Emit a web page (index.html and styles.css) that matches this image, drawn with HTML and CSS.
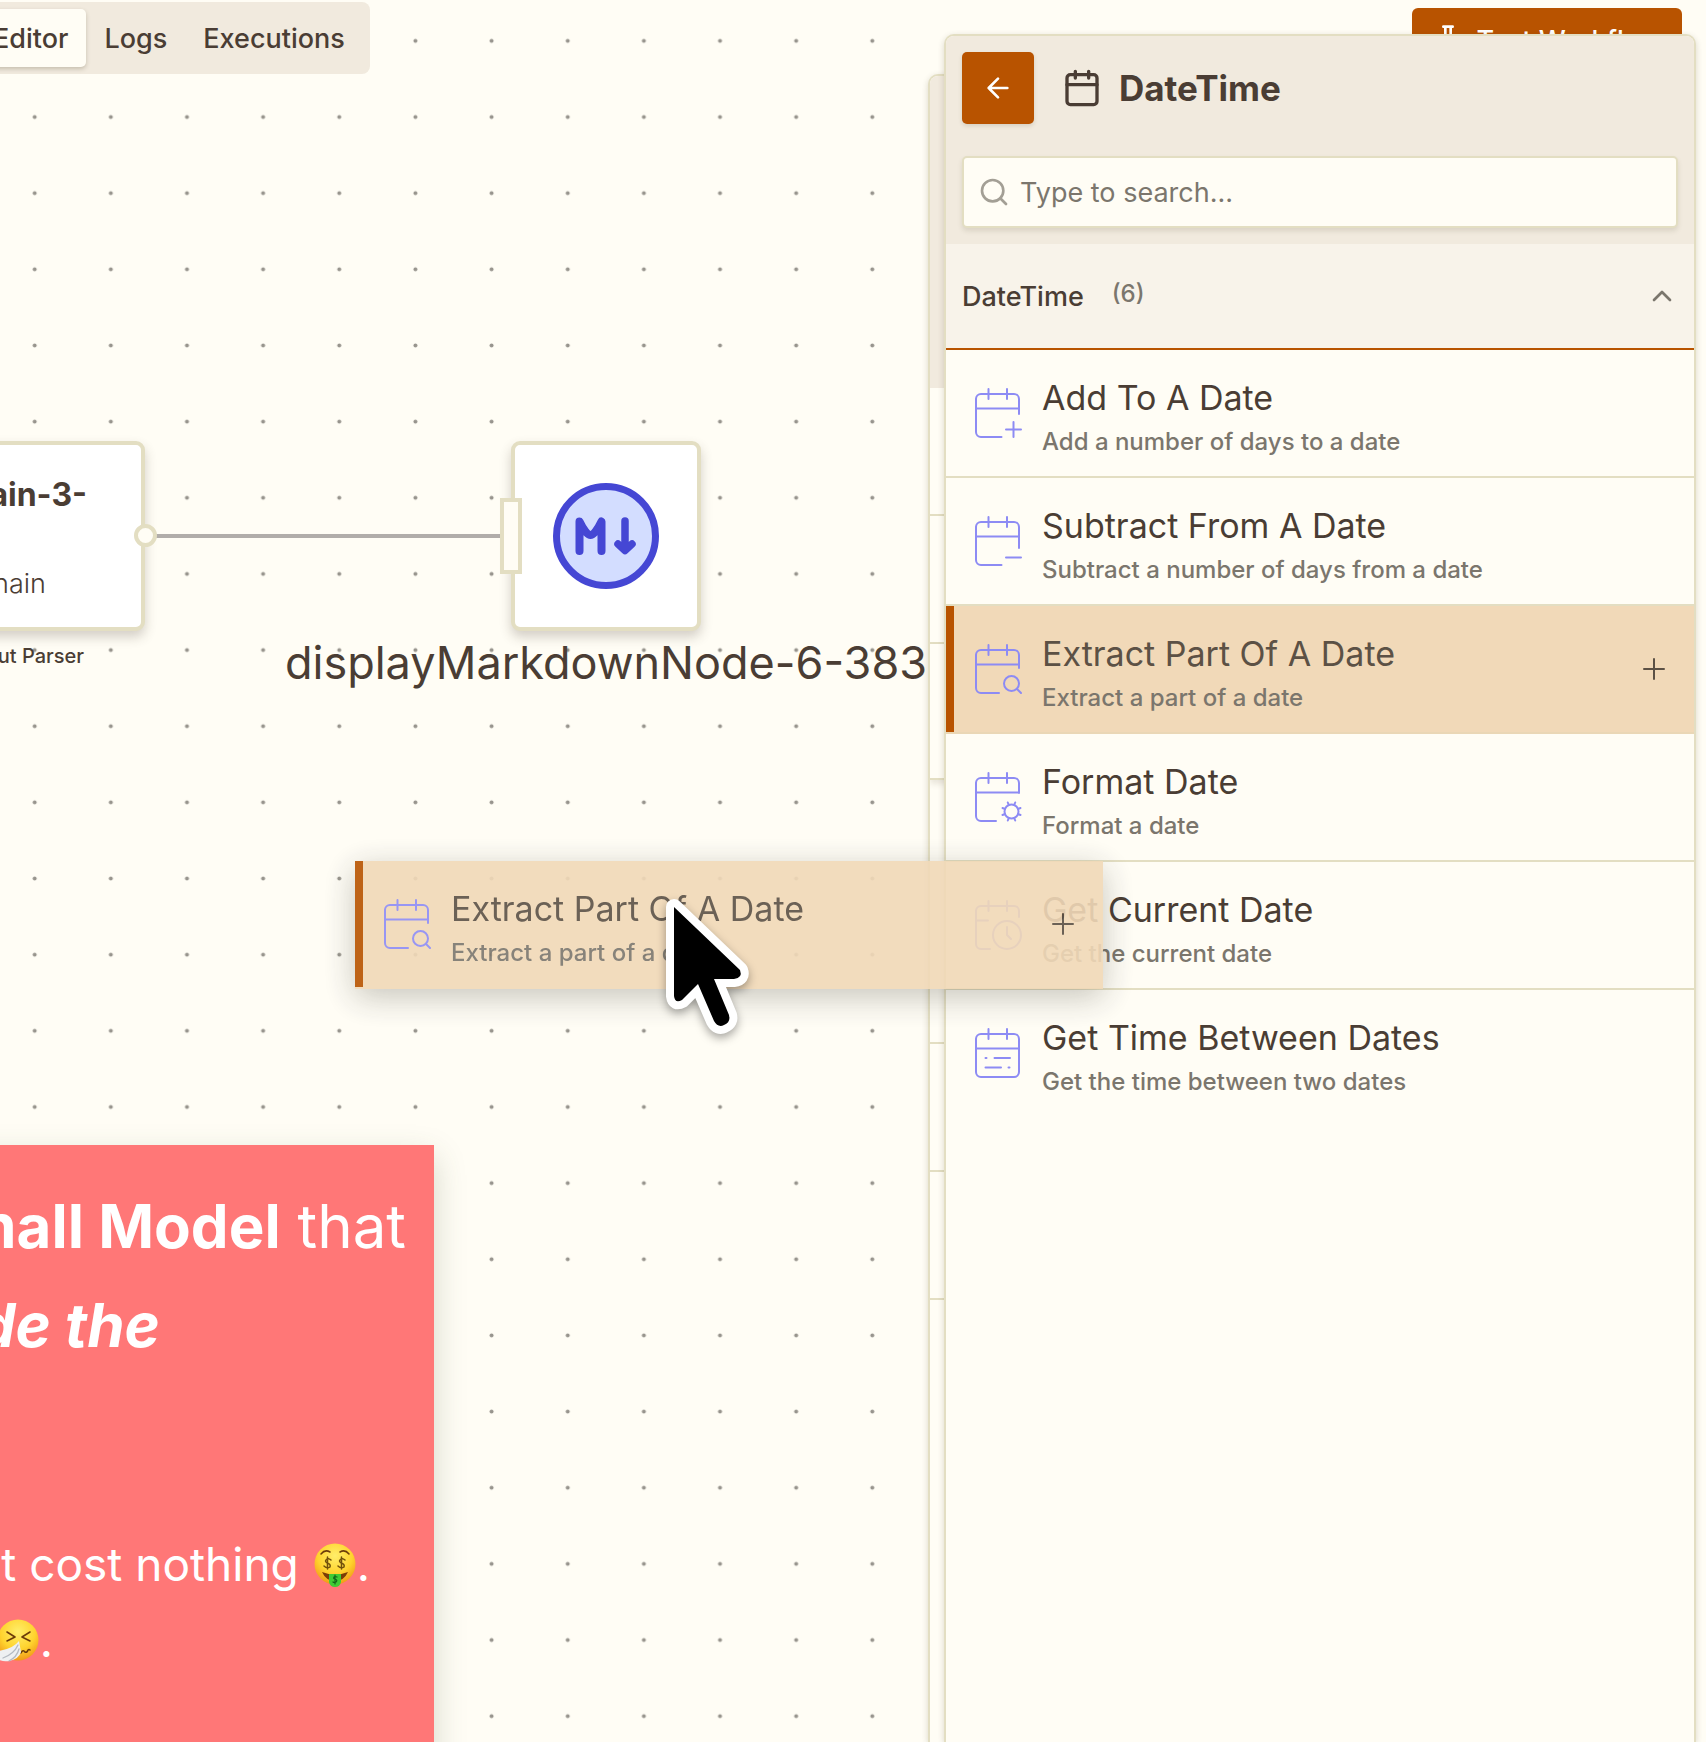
FILE: index.html
```html
<!DOCTYPE html>
<html lang="en">
<head>
<meta charset="utf-8">
<meta name="viewport" content="width=device-width, initial-scale=1">
<title>Workflow Editor</title>
<link rel="stylesheet" href="styles.css">
</head>
<body>
<svg class="sprite" aria-hidden="true">
  <symbol id="cal-plus" viewBox="0 0 48 50">
    <path d="M27.500 49H7a5 5 0 0 1-5-5V11a5 5 0 0 1 5-5h33a5 5 0 0 1 5 5v15M2 20.500h43M14.500 1v10M33 1v10M39.500 34v15M32 41.500h15"/>
  </symbol>
  <symbol id="cal-minus" viewBox="0 0 48 50">
    <path d="M27.500 49H7a5 5 0 0 1-5-5V11a5 5 0 0 1 5-5h33a5 5 0 0 1 5 5v21M2 20.500h43M14.500 1v10M33 1v10M32 41.500h15"/>
  </symbol>
  <symbol id="cal-search" viewBox="0 0 48 50">
    <path d="M25 49H7a5 5 0 0 1-5-5V11a5 5 0 0 1 5-5h33a5 5 0 0 1 5 5v13M2 20.500h43M14.500 1v10M33 1v10M43 45l4 4"/>
    <circle cx="37.500" cy="39.500" r="7.500"/>
  </symbol>
  <symbol id="cal-gear" viewBox="0 0 48 50">
    <path d="M22 49H7a5 5 0 0 1-5-5V11a5 5 0 0 1 5-5h33a5 5 0 0 1 5 5v10M2 20.500h43M14.500 1v10M33 1v10M34.800 33l-1-2.500M40.200 33l1-2.500M34.800 46l-1 2.500M40.200 46l1 2.500M31 37l-2.500-1M31 42l-2.500 1M44 37l2.500-1M44 42l2.500 1"/>
    <circle cx="37.500" cy="39.500" r="7"/>
  </symbol>
  <symbol id="cal-clock" viewBox="0 0 48 50">
    <path d="M16 49H7a5 5 0 0 1-5-5V11a5 5 0 0 1 5-5h33a5 5 0 0 1 5 5v6M2 20.500h12M14.500 1v10M33 1v10M33 27v8l4 4"/>
    <circle cx="33" cy="35" r="14"/>
  </symbol>
  <symbol id="cal-list" viewBox="0 0 48 50">
    <rect x="2" y="6" width="43" height="43" rx="5"/>
    <path d="M2 20.500h43M14.500 1v10M33 1v10M11.500 30h1M20.500 30H36M11.500 39.500H27M34.500 39.500h1"/>
  </symbol>
  <symbol id="plus" viewBox="0 0 24 24"><path d="M12 2v20M2 12h20"/></symbol>
</svg>

<main class="canvas">
  <svg class="grid" aria-hidden="true">
    <defs>
      <pattern id="dots" x="-3.400" y="2.800" width="76.150" height="76.150" patternUnits="userSpaceOnUse">
        <circle cx="38.080" cy="38.080" r="2" fill="#97948d"/>
      </pattern>
    </defs>
    <rect width="100%" height="100%" fill="url(#dots)"/>
  </svg>

  <header class="topbar">
    <nav class="tabs" aria-label="Views">
      <button class="tab tab-active" type="button">Editor</button>
      <button class="tab" type="button">Logs</button>
      <button class="tab" type="button">Executions</button>
    </nav>
    <button class="test-button" type="button">
      <svg class="icon-32" viewBox="0 0 24 24" aria-hidden="true"><path d="M10 2v8L4.700 20.550a1 1 0 0 0 .9 1.450h12.800a1 1 0 0 0 .9-1.450L14 10V2M8.500 2h7M7 16h10"/></svg>
      Test Workflow
    </button>
  </header>

  <div class="edge"></div>

  <article class="node node-chain">
    <h3 class="node-title">chain-3-</h3>
    <p class="node-type">chain</p>
    <span class="port-out"></span>
  </article>
  <p class="port-label">Output Parser</p>

  <article class="node node-markdown">
    <span class="port-in"></span>
    <svg class="markdown-icon" viewBox="0 0 106 106" role="img" aria-label="Markdown">
      <circle cx="53" cy="53" r="49.500" fill="#d3ddff" stroke="#4547d4" stroke-width="7"/>
      <g fill="none" stroke="#4547d4" stroke-width="8" stroke-linecap="round" stroke-linejoin="round">
        <path d="M26.500 68V38.500q6.500 13.500 11 13.500t11-13.500V68"/>
        <path d="M72 38v29M65 61l7 6.500 7-6.500" stroke-width="7.500"/>
      </g>
    </svg>
  </article>
  <p class="node-label">displayMarkdownNode-6-383</p>

  <section class="sticky">
    <p class="sticky-lead"><strong>Small Model</strong> that</p>
    <p class="sticky-lead sticky-second"><strong><em>de the</em></strong></p>
    <p class="sticky-text sticky-third">it cost nothing <svg class="emoji" viewBox="0 0 42 44" role="img" aria-label="Money-mouth face">
      <defs><radialGradient id="face" cx=".5" cy=".3" r=".7"><stop offset="0" stop-color="#ffee6a"/><stop offset=".6" stop-color="#ffd32e"/><stop offset="1" stop-color="#f19a18"/></radialGradient></defs>
      <circle cx="21" cy="21" r="20.500" fill="url(#face)"/>
      <path d="M7 11q4-5 9-2M26 9q5-3 9 2" fill="none" stroke="#6b3c0a" stroke-width="1.500" stroke-linecap="round"/>
      <path d="M8 29q13 5 26 0-4 9-13 9T8 29z" fill="#7a3d08"/>
      <g fill="none" stroke="#71500b" stroke-width="1.500"><path d="M17 17q-2-2-4-1-3 2 0 4 4 1 3 4-3 2-6-1M13.500 14v12M31 17q-2-2-4-1-3 2 0 4 4 1 3 4-3 2-6-1M27.500 14v12"/></g>
      <path d="M15 31h12v8q-1 5-6 5t-6-5z" fill="#3fcb34"/>
      <path d="M23 34q-2-1-3 0-1 2 1 2 3 1 1 3-2 1-3 0M21 32v9" fill="none" stroke="#12651a" stroke-width="1.200"/>
    </svg>.</p>
    <p class="sticky-text sticky-fourth"><svg class="emoji" viewBox="0 0 42 44" role="img" aria-label="Sneezing face">
      <circle cx="21" cy="21" r="20.500" fill="url(#face)"/>
      <path d="M10 13l8 5-8 4M33 13l-8 5 8 4M24 34q2-4 4-1 2 1 3-2 1-1 2 0" fill="none" stroke="#6b3c0a" stroke-width="1.600" stroke-linecap="round"/>
      <path d="M22 22q-6 8-21 10l1 9q5 2 10 1 10-2 12-9z" fill="#eef0f2"/>
      <path d="M21 26q-4 9-15 13M22 30q-2 8-10 12" fill="none" stroke="#b4bac2" stroke-width="1.300"/>
    </svg>.</p>
  </section>

  <aside class="drawer-back" aria-hidden="true">
    <div class="back-head"></div>
    <div class="back-row"></div>
    <div class="back-row"></div>
    <div class="back-row back-row-last"></div>
    <div class="back-row back-row-tall"></div>
    <div class="back-row"></div>
    <div class="back-row"></div>
  </aside>

  <aside class="drawer">
    <div class="drawer-head">
      <div class="drawer-title">
        <button class="back-button" type="button" aria-label="Back">
          <svg class="icon-32" viewBox="0 0 24 24" aria-hidden="true"><path d="M12 19l-7-7 7-7M19 12H5"/></svg>
        </button>
        <svg class="icon-40" viewBox="0 0 24 24" aria-hidden="true"><rect x="3" y="4" width="18" height="18" rx="2"/><path d="M16 2v4M8 2v4M3 10h18"/></svg>
        <h2>DateTime</h2>
      </div>
      <label class="search">
        <svg class="icon-32" viewBox="0 0 24 24" aria-hidden="true"><circle cx="11" cy="11" r="8"/><path d="M21 21l-4.300-4.300"/></svg>
        <input type="search" placeholder="Type to search..." aria-label="Search nodes">
      </label>
    </div>
    <button class="group-head" type="button" aria-expanded="true">
      <span class="group-name">DateTime</span>
      <span class="group-count">(6)</span>
      <svg class="icon-32" viewBox="0 0 24 24" aria-hidden="true"><path d="M18 15l-6-6-6 6"/></svg>
    </button>
    <ul class="items">
      <li class="item">
        <svg class="item-icon" aria-hidden="true"><use href="#cal-plus"/></svg>
        <div class="item-text"><h4>Add To A Date</h4><p>Add a number of days to a date</p></div>
      </li>
      <li class="item">
        <svg class="item-icon" aria-hidden="true"><use href="#cal-minus"/></svg>
        <div class="item-text"><h4>Subtract From A Date</h4><p>Subtract a number of days from a date</p></div>
      </li>
      <li class="item item-active">
        <svg class="item-icon" aria-hidden="true"><use href="#cal-search"/></svg>
        <div class="item-text"><h4>Extract Part Of A Date</h4><p>Extract a part of a date</p></div>
        <svg class="item-add" aria-hidden="true"><use href="#plus"/></svg>
      </li>
      <li class="item">
        <svg class="item-icon" aria-hidden="true"><use href="#cal-gear"/></svg>
        <div class="item-text"><h4>Format Date</h4><p>Format a date</p></div>
      </li>
      <li class="item">
        <svg class="item-icon" aria-hidden="true"><use href="#cal-clock"/></svg>
        <div class="item-text"><h4>Get Current Date</h4><p>Get the current date</p></div>
      </li>
      <li class="item">
        <svg class="item-icon" aria-hidden="true"><use href="#cal-list"/></svg>
        <div class="item-text"><h4>Get Time Between Dates</h4><p>Get the time between two dates</p></div>
      </li>
    </ul>
  </aside>

  <div class="item item-active drag-ghost">
    <svg class="item-icon" aria-hidden="true"><use href="#cal-search"/></svg>
    <div class="item-text"><h4>Extract Part Of A Date</h4><p>Extract a part of a date</p></div>
    <svg class="item-add" aria-hidden="true"><use href="#plus"/></svg>
  </div>

  <svg class="cursor" viewBox="0 0 100 150" aria-hidden="true">
    <path d="M14 17V106q1 8 8 4L38 94l16 37q4 7 10 4 7-3 5-10L54 89H74q9-1 6-9z" fill="#000" stroke="#fff" stroke-width="16" stroke-linejoin="round" paint-order="stroke"/>
  </svg>
</main>
</body>
</html>
```
FILE: styles.css
```css
:root {
  --bg: #fffdf5;
  --panel: #f1eade;
  --line: #e3dec2;
  --text: #4a3d34;
  --muted: #7b766d;
  --accent: #b85300;
  --highlight: #f1d9b8;
}

* { box-sizing: border-box; }

body {
  margin: 0;
  background: var(--bg);
  color: var(--text);
  font-family: Inter, "Liberation Sans", sans-serif;
}

h2, h3, h4, p, ul { margin: 0; padding: 0; font-weight: inherit; }

button { border: 0; font: inherit; color: inherit; cursor: pointer; }

svg { fill: none; stroke: currentColor; stroke-linecap: round; stroke-linejoin: round; }

.sprite { position: absolute; width: 0; height: 0; }
.icon-32 { flex: none; width: 32px; height: 32px; stroke-width: 2; }
.icon-40 { flex: none; width: 40px; height: 40px; stroke-width: 2; }

.canvas { position: relative; height: 100vh; overflow: hidden; }

.grid { position: absolute; inset: 0; width: 100%; height: 100%; stroke: none; }

/* Top bar */
.topbar {
  position: absolute;
  top: 2px;
  left: -32px;
  right: 24px;
  display: flex;
  justify-content: space-between;
  align-items: flex-start;
}

.tabs { display: flex; padding: 7px; border-radius: 8px; background: var(--panel); }

.tab {
  height: 58px;
  padding: 0 18px;
  border-radius: 5px;
  background: transparent;
  font-size: 27px;
  font-weight: 500;
}

.tab-active { background: var(--bg); box-shadow: 0 2px 4px rgba(70, 60, 30, .25); }

.test-button {
  display: flex;
  align-items: center;
  gap: 12px;
  height: 64px;
  margin-top: 6px;
  padding: 0 20px;
  border-radius: 6px;
  background: var(--accent);
  color: #fff;
  font-size: 27px;
  font-weight: 500;
}

/* Nodes on the canvas */
.edge {
  position: absolute;
  left: 156px;
  top: 534px;
  width: 344px;
  height: 4px;
  background: #b1adaa;
}

.node {
  position: absolute;
  top: 441px;
  height: 190px;
  border: 4px solid var(--line);
  border-radius: 9px;
  background: #fff;
  box-shadow: 0 6px 12px rgba(70, 60, 50, .24);
}

.node-chain { left: -240px; width: 385px; padding: 30px 0; text-align: right; }
.node-title { padding-right: 54px; font-size: 32px; line-height: 40px; font-weight: 700; }
.node-type { padding-right: 95px; margin-top: 53px; font-size: 27px; line-height: 32px; font-weight: 300; }

.port-out {
  position: absolute;
  right: -16px;
  top: 79px;
  width: 23px;
  height: 23px;
  border: 4px solid var(--line);
  border-radius: 50%;
  background: var(--bg);
}

.port-label {
  position: absolute;
  left: -156px;
  top: 644px;
  width: 240px;
  text-align: right;
  font-size: 20px;
  line-height: 24px;
  font-weight: 500;
}

.node-markdown {
  left: 511px;
  width: 190px;
  display: flex;
  align-items: center;
  justify-content: center;
}

.port-in {
  position: absolute;
  left: -15px;
  top: 53px;
  width: 22px;
  height: 76px;
  border: 4px solid var(--line);
  background: var(--bg);
}

.markdown-icon { width: 106px; height: 106px; }

.node-label {
  position: absolute;
  left: 256px;
  top: 636px;
  width: 700px;
  text-align: center;
  white-space: nowrap;
  font-size: 45px;
  line-height: 54px;
}

/* Sticky note */
.sticky {
  position: absolute;
  left: -400px;
  top: 1145px;
  bottom: -40px;
  width: 834px;
  background: #ff7777;
  color: #fff;
  text-align: right;
  white-space: nowrap;
  box-shadow: 0 12px 30px rgba(70, 80, 50, .22);
}

.sticky-lead { margin-top: 32px; padding-right: 28px; font-size: 60px; line-height: 99px; }
.sticky-second { margin-top: 0; padding-right: 274px; }
.sticky-text { padding-right: 64px; font-size: 46px; line-height: 76px; }
.sticky-third { margin-top: 151px; }
.sticky-fourth { padding-right: 381px; }
.emoji { width: 42px; height: 44px; margin: 0 1px 0 -3px; vertical-align: -6px; stroke: none; }
.sticky-third .emoji { margin-left: 2px; }

/* Drawers */
.drawer-back, .drawer {
  position: absolute;
  bottom: 0;
  width: 752px;
  max-width: 100%;
  border: 2px solid var(--line);
  border-bottom: 0;
  border-radius: 10px 10px 0 0;
  background: var(--bg);
  box-shadow: 0 2px 6px rgba(70, 60, 30, .2);
  overflow: hidden;
}

.drawer-back { top: 74px; right: 26px; }
.back-head { height: 312px; background: var(--panel); }
.back-row { height: 128px; border-bottom: 2px solid var(--line); }
.back-row-last { height: 136px; box-shadow: 0 4px 6px rgba(70, 60, 30, .12); }
.back-row-tall { height: 264px; }

.drawer { top: 34px; right: 10px; }

.drawer-head { padding: 16px; background: var(--panel); }

.drawer-title { display: flex; align-items: center; height: 72px; margin-bottom: 32px; }
.drawer-title h2 { margin-left: 17px; font-size: 35px; line-height: 44px; font-weight: 700; }

.back-button {
  display: flex;
  align-items: center;
  justify-content: center;
  width: 72px;
  height: 72px;
  margin-right: 28px;
  border-radius: 5px;
  background: var(--accent);
  color: #fff;
  box-shadow: 0 2px 4px rgba(70, 60, 30, .15);
}

.search {
  display: flex;
  align-items: center;
  gap: 10px;
  height: 72px;
  padding: 0 14px;
  border: 2px solid var(--line);
  border-radius: 5px;
  background: var(--bg);
  color: #a39f95;
  box-shadow: 0 3px 5px rgba(70, 60, 30, .13);
}

.search input {
  flex: 1;
  min-width: 0;
  padding: 0;
  border: 0;
  outline: 0;
  background: transparent;
  color: var(--text);
  font: inherit;
  font-size: 27px;
}

.search input::placeholder { color: var(--muted); opacity: 1; }

.group-head {
  display: flex;
  align-items: center;
  width: 100%;
  height: 106px;
  padding: 0 16px;
  border-bottom: 2px solid var(--accent);
  background: #f8f3ea;
}

.group-name { font-size: 27px; font-weight: 500; }
.group-count { margin: 0 auto 6px 28px; color: var(--muted); font-size: 24px; font-weight: 500; }
.group-head .icon-32 { color: var(--muted); }

.items { list-style: none; }

.item {
  display: flex;
  align-items: flex-start;
  gap: 20px;
  height: 128px;
  padding: 26px 26px 0 28px;
  border-bottom: 2px solid var(--line);
}

.item:last-child { border-bottom: 0; }

.item-icon { flex: none; width: 48px; height: 50px; margin-top: 12px; color: #8d8bf4; stroke-width: 2; }
.item-text { flex: 1; white-space: nowrap; }
.item h4 { font-size: 34px; line-height: 44px; }
.item p { margin-top: 6px; color: var(--muted); font-size: 24px; line-height: 32px; font-weight: 500; }

.item-active {
  border-bottom-color: #ead7b6;
  background: var(--highlight);
  box-shadow: inset 8px 0 var(--accent);
}

.item-active h4 { color: #5c5145; }
.item-add { width: 24px; height: 24px; margin: 25px 2px 0 0; stroke-width: 2; color: #5c5145; }

.drag-ghost {
  position: absolute;
  left: 355px;
  top: 861px;
  width: 748px;
  border-bottom-color: var(--highlight);
  opacity: .9;
  box-shadow: inset 8px 0 var(--accent), 0 8px 30px rgba(60, 60, 50, .32);
}

.cursor {
  position: absolute;
  left: 660px;
  top: 890px;
  width: 100px;
  height: 150px;
  overflow: visible;
  filter: drop-shadow(0 4px 5px rgba(0, 0, 0, .35));
}
```
